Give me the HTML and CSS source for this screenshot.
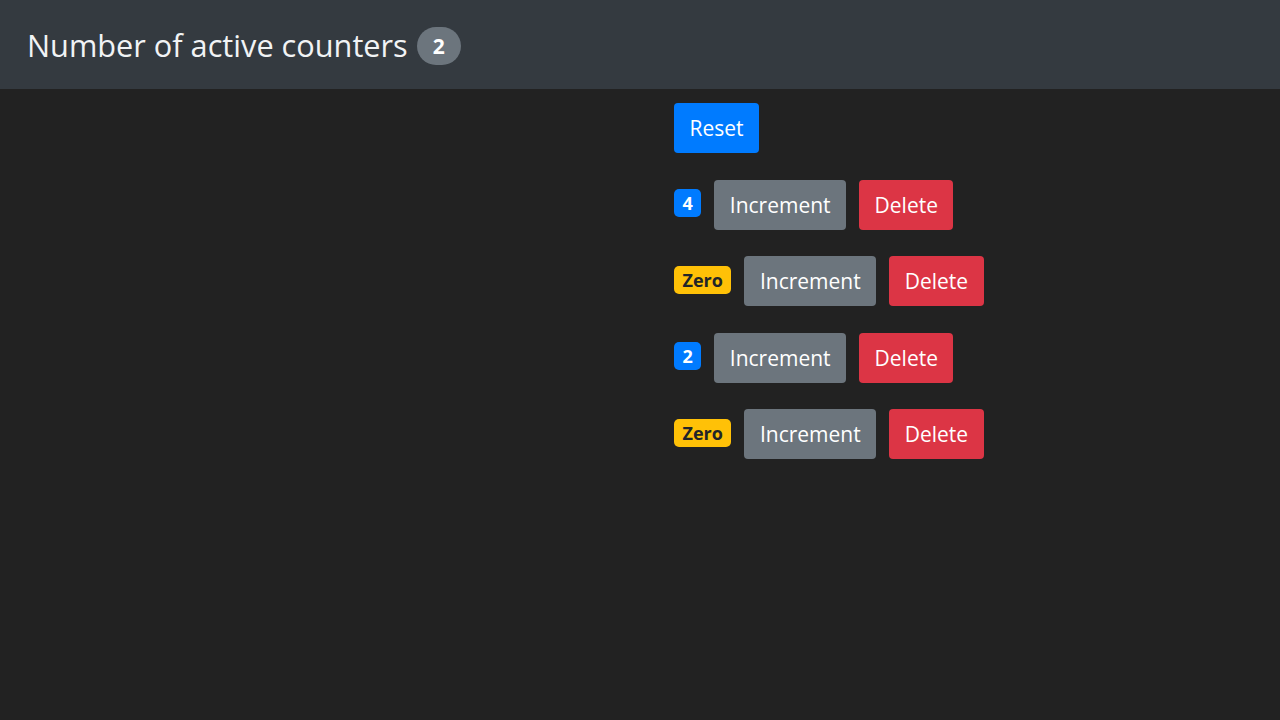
FILE: index.html
```html
<!DOCTYPE html>
<html lang="en">
<head>
<meta charset="utf-8">
<title>Counters</title>
<link rel="stylesheet" href="styles.css">
</head>
<body>
<nav class="navbar">
  <span class="brand">Number of active counters</span>
  <span class="pill">2</span>
</nav>
<main class="content">
  <div class="row"><button class="btn btn-primary">Reset</button></div>
  <div class="row"><span class="badge badge-primary">4</span><button class="btn btn-secondary">Increment</button><button class="btn btn-danger">Delete</button></div>
  <div class="row"><span class="badge badge-warning">Zero</span><button class="btn btn-secondary">Increment</button><button class="btn btn-danger">Delete</button></div>
  <div class="row"><span class="badge badge-primary">2</span><button class="btn btn-secondary">Increment</button><button class="btn btn-danger">Delete</button></div>
  <div class="row"><span class="badge badge-warning">Zero</span><button class="btn btn-secondary">Increment</button><button class="btn btn-danger">Delete</button></div>
</main>
</body>
</html>
```
FILE: styles.css
```css
html, body {
  margin: 0;
  padding: 0;
}
body {
  background: #222222;
  font-family: "Open Sans", "Noto Sans", sans-serif;
  color: #fff;
  height: 720px;
}
.navbar {
  background: #343a40;
  height: 89px;
  display: flex;
  align-items: center;
  padding-left: 27px;
  box-sizing: border-box;
}
.brand {
  font-size: 30.7px;
  color: #f1f3f5;
  margin-right: 9px;
}
.pill {
  display: inline-flex;
  align-items: center;
  justify-content: center;
  width: 44px;
  height: 38px;
  border-radius: 19px;
  background: #6c757d;
  color: #fff;
  font-weight: 700;
  font-size: 21px;
  margin-top: 2px;
}
.content {
  padding-left: 674px;
  padding-top: 14px;
  display: flex;
  flex-direction: column;
  gap: 26.5px;
}
.row {
  display: flex;
  align-items: center;
  gap: 13px;
}
.btn {
  font-family: inherit;
  font-size: 21px;
  line-height: 30px;
  padding: 10px 15.5px;
  border: none;
  border-radius: 4px;
  color: #fff;
}
.btn-primary { background: #007bff; }
.btn-secondary { background: #6c757d; }
.btn-danger { background: #dc3545; }
.badge {
  display: inline-flex;
  align-items: center;
  justify-content: center;
  height: 28px;
  padding: 0 8.5px;
  border-radius: 5px;
  font-weight: 700;
  font-size: 18px;
  margin-top: -3px;
}
.badge-primary { background: #007bff; color: #fff; }
.badge-warning { background: #ffc107; color: #212529; }
```
